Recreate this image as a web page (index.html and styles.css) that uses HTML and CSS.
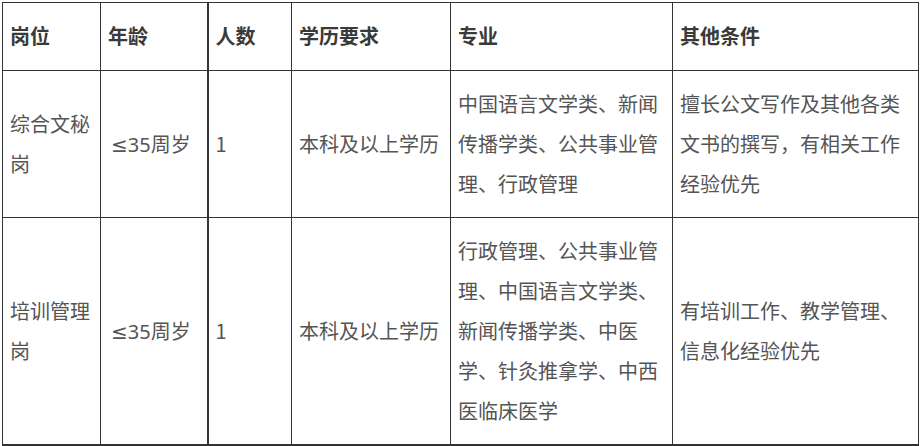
FILE: index.html
```html
<!DOCTYPE html>
<html lang="zh-CN">
<head>
<meta charset="utf-8">
<title>岗位要求</title>
<link rel="stylesheet" href="styles.css">
</head>
<body>
<table class="jobs">
  <colgroup>
    <col class="c1"><col class="c2"><col class="c3"><col class="c4"><col class="c5"><col class="c6">
  </colgroup>
  <thead>
    <tr>
      <th>岗位</th>
      <th>年龄</th>
      <th class="thick">人数</th>
      <th>学历要求</th>
      <th>专业</th>
      <th>其他条件</th>
    </tr>
  </thead>
  <tbody>
    <tr class="r1">
      <td>综合文秘岗</td>
      <td><span class="latin">≤35</span>周岁</td>
      <td class="thick">1</td>
      <td>本科及以上学历</td>
      <td>中国语言文学类、新闻传播学类、公共事业管理、行政管理</td>
      <td>擅长公文写作及其他各类文书的撰写，有相关工作经验优先</td>
    </tr>
    <tr class="r2">
      <td>培训管理岗</td>
      <td><span class="latin">≤35</span>周岁</td>
      <td class="thick">1</td>
      <td>本科及以上学历</td>
      <td>行政管理、公共事业管理、中国语言文学类、新闻传播学类、中医学、针灸推拿学、中西医临床医学</td>
      <td>有培训工作、教学管理、信息化经验优先</td>
    </tr>
  </tbody>
</table>
</body>
</html>
```

FILE: styles.css
```css
html, body {
  margin: 0;
  padding: 0;
  background: #ffffff;
}

body {
  padding: 2px;
  font-family: "Noto Sans CJK SC", "Noto Sans", sans-serif;
}

.jobs {
  border-collapse: collapse;
  table-layout: fixed;
  width: 916px;
  font-size: 20px;
  line-height: 40px;
  color: #555555;
}

.c1 { width: 98px; }
.c2 { width: 107px; }
.c3 { width: 84px; }
.c4 { width: 159px; }
.c5 { width: 222px; }
.c6 { width: 246px; }

.jobs th,
.jobs td {
  border: 1px solid #333333;
  padding: 13px 7px;
  text-align: left;
  vertical-align: middle;
  word-break: break-all;
}

.jobs th {
  font-weight: bold;
  color: #3a3a3a;
  padding: 13px 7px 14px;
}

.jobs .thick {
  border-left: 2px solid #333333;
}

.jobs tbody tr:last-child td {
  border-bottom: 2px solid #333333;
}

.latin {
  font-family: "Noto Sans", "DejaVu Sans", sans-serif;
  margin-left: 3px;
}
```
